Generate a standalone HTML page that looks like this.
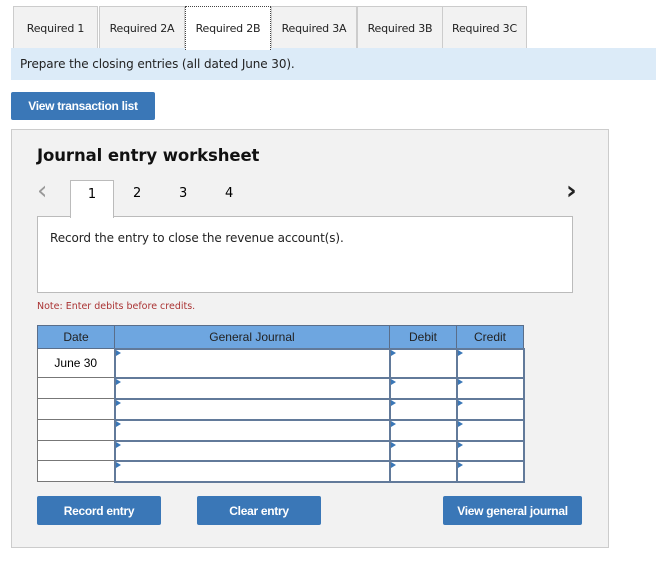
<!DOCTYPE html>
<html><head><style>
body{margin:0;width:656px;height:563px;background:#fff;font-family:"DejaVu Sans",Verdana,sans-serif;position:relative;overflow:hidden}
.a{position:absolute;box-sizing:border-box}
.tab{position:absolute;top:6px;height:42px;background:#f2f2f2;border:1px solid #ccc;border-bottom:none;font-size:11px;letter-spacing:-0.2px;color:#222;display:flex;align-items:center;justify-content:center}
.btn{position:absolute;background:#3a77b7;color:#fff;font-family:"Liberation Sans",Arial,sans-serif;font-weight:bold;font-size:12px;display:flex;align-items:center;justify-content:center;border-radius:2px;letter-spacing:-0.3px}
table{position:absolute;left:37px;top:325px;border-collapse:collapse;font-family:"Liberation Sans",Arial,sans-serif;font-size:12px;table-layout:fixed;width:486px}
td,th{padding:0;box-sizing:border-box}
th{background:#6ea6e0;border:1px solid #5a6e8a;font-weight:normal;color:#222;height:23px}
td{background:#fff;border:2px solid #627a9a;position:relative}
td.d{border:1px solid #777;text-align:center}
td.i::before{content:"";position:absolute;left:0;top:0;border-left:5px solid #3a77b7;border-top:3px solid transparent;border-bottom:3px solid transparent}
</style></head><body>
<div class="tab" style="left:13px;width:83px">Required 1</div>
<div class="tab" style="left:99px;width:84px">Required 2A</div>
<div class="tab" style="left:185px;width:84px;background:#fff;border:1px dotted #444;border-bottom:none;height:43px;z-index:2">Required 2B</div>
<div class="tab" style="left:271px;width:84px">Required 3A</div>
<div class="tab" style="left:357px;width:84px">Required 3B</div>
<div class="tab" style="left:442px;width:83px">Required 3C</div>
<div class="a" style="left:11px;top:48px;width:645px;height:32px;background:#dcebf8;font-size:12px;letter-spacing:-0.1px;color:#222;padding:9px 0 0 9px">Prepare the closing entries (all dated June 30).</div>
<div class="btn" style="left:11px;top:92px;width:144px;height:28px">View transaction list</div>
<div class="a" style="left:11px;top:129px;width:598px;height:419px;background:#f2f2f2;border:1px solid #ccc"></div>
<div class="a" style="left:37px;top:146px;font-size:16.5px;letter-spacing:-0.1px;font-weight:bold;color:#111">Journal entry worksheet</div>
<div class="a" style="left:37px;top:176px;font-size:26px;color:#999;line-height:30px">&#8249;</div>
<div class="a" style="left:566px;top:176px;font-size:26px;color:#222;font-weight:bold;line-height:30px">&#8250;</div>
<div class="a" style="left:37px;top:216px;width:536px;height:77px;background:#fff;border:1px solid #bbb;font-size:12px;letter-spacing:-0.1px;color:#222;padding:14px 0 0 12px">Record the entry to close the revenue account(s).</div>
<div class="a" style="left:70px;top:180px;width:44px;height:38px;background:#fff;border:1px solid #bbb;border-bottom:none;font-size:13px;text-align:center;padding-top:6px">1</div>
<div class="a" style="left:133px;top:186px;font-size:13px">2</div>
<div class="a" style="left:179px;top:186px;font-size:13px">3</div>
<div class="a" style="left:225px;top:186px;font-size:13px">4</div>
<div class="a" style="left:37px;top:301px;font-size:9.5px;letter-spacing:0px;color:#a33">Note: Enter debits before credits.</div>
<table>
<colgroup><col style="width:77px"><col style="width:275px"><col style="width:67px"><col style="width:67px"></colgroup>
<tr><th>Date</th><th>General Journal</th><th>Debit</th><th>Credit</th></tr>
<tr style="height:29px"><td class="d">June 30</td><td class="i"></td><td class="i"></td><td class="i"></td></tr>
<tr style="height:21px"><td class="d"></td><td class="i"></td><td class="i"></td><td class="i"></td></tr>
<tr style="height:21px"><td class="d"></td><td class="i"></td><td class="i"></td><td class="i"></td></tr>
<tr style="height:21px"><td class="d"></td><td class="i"></td><td class="i"></td><td class="i"></td></tr>
<tr style="height:20px"><td class="d"></td><td class="i"></td><td class="i"></td><td class="i"></td></tr>
<tr style="height:21px"><td class="d"></td><td class="i"></td><td class="i"></td><td class="i"></td></tr>
</table>
<div class="btn" style="left:37px;top:496px;width:124px;height:29px">Record entry</div>
<div class="btn" style="left:197px;top:496px;width:124px;height:29px">Clear entry</div>
<div class="btn" style="left:443px;top:496px;width:139px;height:29px">View general journal</div>
</body></html>
